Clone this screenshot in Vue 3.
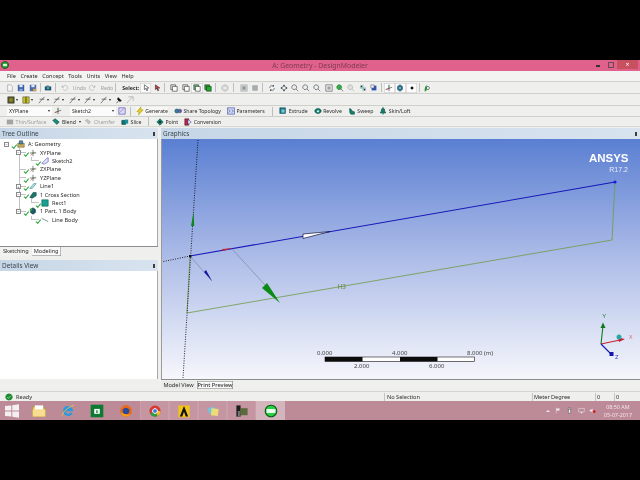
<template>
  <div class="page">
    <div class="band"></div>

    <div class="window">
      <div class="titlebar">
        <Ic name="dm" class="title-logo" />
        <span class="title">A: Geometry - DesignModeler</span>
        <div class="win-btns">
          <span class="win-min"></span>
          <span class="win-max"></span>
          <span class="win-close">×</span>
        </div>
      </div>

      <div class="menubar">
        <span v-for="m in menus" :key="m">{{ m }}</span>
      </div>

      <div class="bar row1">
        <template v-for="(it, i) in row1" :key="i">
          <span v-if="it === '|'" class="sep"></span>
          <span v-else-if="it.text" class="tool" :class="it.cls"><Ic v-if="it.ic" :name="it.ic" />{{ it.text }}</span>
          <span v-else class="btn" :class="it.cls"><Ic :name="it.ic" /></span>
        </template>
      </div>

      <div class="bar row2">
        <span v-for="(it, i) in row2" :key="i" class="btn" :class="it.cls"><Ic :name="it.ic" /><i v-if="it.drop" class="caret"></i></span>
      </div>

      <div class="bar row3">
        <span class="combo">XYPlane<i class="caret"></i></span>
        <span class="btn"><Ic name="axes" /></span>
        <span class="combo second">Sketch2<i class="caret"></i></span>
        <span class="btn"><Ic name="sketch" /></span>
        <span class="sep"></span>
        <span v-for="t in row3" :key="t.text" class="tool" :class="t.cls"><span v-if="t.line" class="sep inline"></span><Ic :name="t.ic" />{{ t.text }}</span>
      </div>

      <div class="bar row4">
        <span v-for="t in row4" :key="t.text" class="tool" :class="t.cls"><span v-if="t.line" class="sep inline"></span><Ic :name="t.ic" />{{ t.text }}<i v-if="t.drop" class="caret"></i></span>
      </div>

      <div class="work">
        <aside class="left">
          <div class="panel-head">Tree Outline<span class="pin"></span></div>
          <div class="tree">
            <div v-for="n in tree" :key="n.text" class="node" :class="['lv' + n.lv, n.cls]">
              <span class="box" :class="{ off: !n.box }">{{ n.box }}</span>
              <span class="check"></span>
              <Ic :name="n.ic" />
              <span class="node-text">{{ n.text }}</span>
            </div>
          </div>
          <div class="tabs">
            <span class="tab">Sketching</span>
            <span class="tab on">Modeling</span>
          </div>
          <div class="panel-head details">Details View<span class="pin"></span></div>
          <div class="details-body"></div>
        </aside>

        <main class="right">
          <div class="panel-head">Graphics<span class="pin"></span></div>
          <div class="canvas">
            <svg class="scene" viewBox="161 139 479 240" width="479" height="240">
              <defs>
                <linearGradient id="sky" x1="0" y1="0" x2="0" y2="1">
                  <stop offset="0" stop-color="#5a7fd2" />
                  <stop offset="0.5" stop-color="#aebde8" />
                  <stop offset="1" stop-color="#f6f7fc" />
                </linearGradient>
              </defs>
              <rect x="161" y="139" width="479" height="240" fill="url(#sky)" />

              <path d="M190 256L187 313L612 240L615 182" fill="none" stroke="#6f9a45" stroke-width="0.8" />
              <path d="M198 140L183 378M161 262L190 256" fill="none" stroke="#111" stroke-width="0.9" stroke-dasharray="1 1.4" />
              <path d="M190 256L615 182" stroke="#1818b8" stroke-width="1.1" />
              <path d="M190 256L212 281M233 250L265 285" stroke="#6f7f9a" stroke-width="0.6" />
              <circle cx="615" cy="182" r="1.6" fill="#1a1ae0" />
              <rect x="189" y="255" width="2.4" height="2.4" fill="#111" />

              <path d="M193.700 212L191 226L194.200 226Z" fill="#0c8a18" />
              <path d="M204 272L206 270L212 281Z" fill="#1414a8" />
              <path d="M222 249L233 248L223 251Z" fill="#c8283a" />
              <path d="M303 234L330 231.500L303 238.500Z" fill="#fff" stroke="#14143c" stroke-width="0.7" />
              <path d="M262 288L267 283L280 303Z" fill="#0c8a18" />

              <text x="337.500" y="288.500" class="dim">H3</text>

              <text x="628.500" y="162" text-anchor="end" class="brand">ANSYS</text>
              <text x="628" y="171.500" text-anchor="end" class="brand-sub">R17.2</text>

              <rect x="325" y="357" width="149.500" height="4.400" fill="#fff" stroke="#111" stroke-width="0.6" />
              <rect x="325" y="357" width="37.500" height="4.400" fill="#0c0c0c" />
              <rect x="400" y="357" width="37.500" height="4.400" fill="#0c0c0c" />
              <text x="317" y="355" class="scale">0.000</text>
              <text x="392" y="355" class="scale">4.000</text>
              <text x="467" y="355" class="scale">8.000 (m)</text>
              <text x="354" y="368" class="scale">2.000</text>
              <text x="429" y="368" class="scale">6.000</text>

              <path d="M601 344L603 326" stroke="#0c7a18" stroke-width="1.100" />
              <path d="M603 322.500L600.500 328L605.500 328Z" fill="#0c7a18" />
              <path d="M601 344L620 340" stroke="#c42030" stroke-width="1.100" />
              <path d="M625 339L618 337.500L619 342Z" fill="#c42030" />
              <path d="M601 344L611 354" stroke="#1414b0" stroke-width="1.100" />
              <rect x="609.500" y="352" width="4" height="4" fill="#1414b0" />
              <circle cx="619" cy="337" r="2.500" fill="#2aa8a8" />
              <text x="602.500" y="318" class="axis y">Y</text>
              <text x="629" y="339" class="axis x">X</text>
              <text x="615" y="359" class="axis z">Z</text>
            </svg>
          </div>
          <div class="view-tabs">
            <span class="tab vt first">Model View</span>
            <span class="tab on vt second">Print Preview</span>
          </div>
        </main>
      </div>

      <div class="status">
        <span class="st-ready"><Ic name="ok" />Ready</span>
        <span class="st-sel">No Selection</span>
        <span class="st-unit">Meter</span>
        <span class="st-deg">Degree</span>
        <span class="st-num">0</span>
        <span class="st-num">0</span>
      </div>

      <div class="taskbar">
        <span v-for="t in taskbar" :key="t.ic" class="task" :class="t.cls"><Ic :name="t.ic" /></span>
        <div class="tray">
          <span class="tray-up"></span>
          <Ic name="flag" /><Ic name="plug" /><Ic name="net" /><Ic name="mute" />
          <div class="clock">
            <span>08:50 AM</span>
            <span>05-07-2017</span>
          </div>
        </div>
      </div>
    </div>

    <div class="band"></div>
  </div>
</template>

<script setup>
import { h } from "vue";

// each icon is a list of [path, fill, stroke] on a 10x10 box
const icons = {
  dm: [["M5 .5a4.5 4.5 0 1 0 .01 0z", "#1a9a2a", "#0b3a12"], ["M2.500 3.500h5v3h-5z", "#d8f5d8"]],
  page: [["M2 1h4l2 2v6H2z", "#f4f4f4", "#8a92a0"]],
  save: [["M1 1h8v8H1z", "#3a5fa8"], ["M3 1h4v3H3z", "#dfe6f4"], ["M3 6h4v3H3z", "#8da4d0"]],
  saveas: [["M1 1h8v8H1z", "#4a6ab0"], ["M3 1h4v3H3z", "#dfe6f4"], ["M5 6h4v3H5z", "#d8a040"]],
  cam: [["M1 3h8v5H1z", "#26506a"], ["M3.500 4a1.700 1.700 0 1 0 3 0z", "#30c0c8"], ["M3 2h3v1H3z", "#26506a"]],
  undo: [["M3 2.500a3.200 3.200 0 1 1-.5 4", "none", "#a8a8a8"], ["M1 1.500v3h3z", "#a8a8a8"]],
  redo: [["M7 2.500a3.200 3.200 0 1 0 .5 4", "none", "#a8a8a8"], ["M9 1.500v3H6z", "#a8a8a8"]],
  point: [["M3 1L3 7L5 5.500L6 8.500L7 8L6 5h2.500z", "#fff", "#222"]],
  pick: [["M3 1L3 7L5 5.500L6 8.500L7 8L6 5h2.500z", "#d04040", "#222"]],
  face: [["M1 1h6v6H1z", "#e8f0e8", "#222"], ["M3 3h6v6H3z", "#fff", "#222"]],
  faceg: [["M1 1h6v6H1z", "#6ac070", "#222"], ["M3 3h6v6H3z", "#fff", "#222"]],
  faceb: [["M1 1h6v6H1z", "#2ea838", "#222"], ["M3 3h6v6H3z", "#18b028", "#222"]],
  globe: [["M5 1a4 4 0 1 0 .01 0z", "#d6d6d6", "#a8a8a8"], ["M3 4h4v2H3z", "#efefef"]],
  sel: [["M1 1h8v8H1z", "#cfd4d4", "#9aa0a0"], ["M3 3h4v4H3z", "#8e9696"]],
  sel2: [["M2 2h6v6H2z", "#a8aeae", "#9aa0a0"]],
  rot: [["M8 5a3 3 0 0 1-5 2.300M2 5a3 3 0 0 1 5-2.300", "none", "#2a3a4a"], ["M7.500 .800v2.400H5.200z", "#2a3a4a"], ["M2.500 9.200V6.800h2.300z", "#2a3a4a"]],
  pan: [["M5 .5L7 3H3zM5 9.500L3 7h4zM.5 5L3 3v4zM9.500 5L7 7V3z", "#30404e"]],
  zoom: [["M4 1a3 3 0 1 0 .01 0z", "#e8eef2", "#333"], ["M6 6l3 3", "none", "#333"]],
  zoomg: [["M4 1a3 3 0 1 0 .01 0z", "#30b040", "#1a6a28"], ["M6 6l3 3", "none", "#333"]],
  zoomx: [["M4 1a3 3 0 1 0 .01 0z", "#e0e0e0", "#a0a0a0"], ["M6 6l3 3", "none", "#a0a0a0"]],
  fit: [["M1 1h8v8H1z", "#eef0f0", "#444"], ["M3 3h4v4H3z", "#9aa4a8"]],
  iso: [["M5 1v8M1 5h8", "none", "#30a0a8"], ["M2 2h2v2H2zM6 6h2v2H6z", "#333"]],
  cube: [["M2 2h6v6H2z", "#2e54b0"], ["M1 1h4v4H1z", "#e8eef8", "#666"]],
  axes: [["M5 1v8M1 7l8-3", "none", "#223"], ["M5 1v4", "none", "#2a9a30"], ["M1 7l4-1.500", "none", "#c83030"]],
  body: [["M2 3l3-2 3 2v4l-3 2-3-2z", "#2a7a9a", "#1a3a4a"], ["M4 4h2v2H4z", "#9ac8e0"]],
  dot: [["M5 3.200a1.800 1.800 0 1 0 .01 0z", "#111"]],
  leaf: [["M2 9C2 4 4 2 4 1c1 2 1 6 0 8z", "#1da030"], ["M6 3a2 2 0 1 0 .01 0z", "none", "#222"]],
  square: [["M1 1h8v8H1z", "#5a5a20", "#333"], ["M3 3h4v4H3z", "#8a8a30"]],
  yellow: [["M1 1h8v8H1z", "#c8c020", "#555"], ["M4 1h2v8H4z", "#777720"]],
  lines: [["M1 9L8 1M2 4h6", "none", "#222"]],
  pinned: [["M2 9l3-4M4 2l4 4-2 1-3-3z", "#111", "#111"]],
  slash: [["M1 9L8 1M3 1h6v5", "none", "#999"]],
  bolt: [["M6 0L1 6h3L3 10l6-6.500H6z", "#e8d020", "#a89010"]],
  share: [["M1 5a2.500 2.500 0 1 0 5 0a2.500 2.500 0 1 0-5 0z", "#2a8a9a", "#164a5a"], ["M5 5a2.200 2.200 0 1 0 4.500 0a2.200 2.200 0 1 0-4.500 0z", "#6a62b8", "#3a3070"]],
  param: [["M.5 1h9v8h-9z", "#cfd8f0", "#2a38a0"], ["M2 3l2 2-2 2M6 3l2 2-2 2", "none", "#2a38a0"]],
  sketch: [["M1 1h8v8H1z", "#dcdcf4", "#3a3ab0"], ["M2 7l5-5", "none", "#b03ab0"]],
  extrude: [["M1 1h7v7H1z", "#1a7a8a", "#0a3a4a"], ["M3 3h4v4H3z", "#70c8d0"]],
  revolve: [["M5 2a4 3 0 1 0 .01 0z", "#1a8070", "#0a3a3a"], ["M5 4a1.500 1.200 0 1 0 .01 0z", "#bfe"]],
  sweep: [["M2 2c3 0 2 4 6 4v3H4C2 9 2 5 2 2z", "#14806a", "#0a4a40"]],
  loft: [["M5 .5L7.500 4h-1l2 3.500h-7l2-3.500h-1z", "#14806a", "#0a4a40"], ["M4.300 7.500h1.400V9.500H4.300z", "#14806a"]],
  thin: [["M1 2h8v6H1z", "#a4a4a4"]],
  blend: [["M1 3l3-2 5 4-3 3z", "#12907a", "#0a3a3a"]],
  chamfer: [["M1 3l3-2 5 4-3 3z", "#c0c0c0"]],
  slice: [["M1 3h5v5H1z", "#12707a", "#0a3a3a"], ["M5 2h4v5H5z", "#1a9098"]],
  pointg: [["M5 1l4 4-4 4-4-4z", "#14806a", "#0a4a40"], ["M4 4h2v2H4z", "#111"]],
  conv: [["M1 1h5v8H1z", "#b02a40", "#601020"], ["M5 2l4 3-4 3z", "#fff", "#2030a0"]],
  geom: [["M1 4h8v5H1z", "#c8b060", "#6a5a20"], ["M3 1h4v4H3z", "#4a90b0", "#1a3a5a"]],
  plane: [["M5 1v8M1 5h8", "none", "#222"], ["M2 8l3-3", "none", "#c02a2a"], ["M5 5l3-1", "none", "#2a9a30"]],
  sk: [["M1 8L8 1h1v5L4 9z", "#e4e4fa", "#4040b0"]],
  line1: [["M1 8L6 2h3L4 8z", "#bfe6e0", "#20808a"]],
  cross: [["M1 8L5 2h4v4L4 9z", "#1a7a70", "#0a3a3a"]],
  rect: [["M1 1h8v8H1z", "#18a090", "#0a5a50"]],
  part: [["M2 3l3-2 3 2v4l-3 2-3-2z", "#1a5a6a", "#0a2a3a"], ["M1 2h3v3H1z", "#30a040"]],
  lineb: [["M1 3l8 4", "none", "#2a3a4a"]],
  ok: [["M5 .5a4.500 4.500 0 1 0 .01 0z", "#1b8a30"], ["M2.800 5l1.600 1.700L7.400 3.400", "none", "#fff"]],
  win: [["M0 1.500L4.500 1v3.700H0zM5.200.9L10 .2v4.500H5.200zM0 5.300h4.500V9L0 8.500zM5.200 5.300H10v4.500L5.200 9.100z", "#f4f0f2"]],
  folder: [["M.5 2h3.500l1 1H9.500v6H.5z", "#f2cf70", "#b89040"], ["M2 1h6v3H2z", "#fff"], ["M.5 4h9v5h-9z", "#f7dd90"]],
  ie: [["M5 1.500a3.500 3.500 0 1 0 3.300 4.700H6.500a1.800 1.800 0 0 1-3.200-1h5.300A3.500 3.500 0 0 0 5 1.500z", "#2a9ae0"], ["M.8 8.500C1 6 5 2 9.300 1", "none", "#e8c040"]],
  store: [["M.5.5h9v9h-9z", "#0c7a30"], ["M3 3.500h4v3.500H3z", "#fff"], ["M4.500 4.500h.5v2h-.5zM5.300 4.500h.5v2h-.5z", "#0c7a30"]],
  fox: [["M5 .8a4.200 4.200 0 1 0 .01 0z", "#e86a1a"], ["M5 2.600a2.400 2.400 0 1 0 .01 0z", "#2a4a9a"], ["M1 6c1 3 5 4 7.500 1.500C6 8 3 7 1 6z", "#f4a020"]],
  chrome: [["M5 1a4 4 0 1 0 .01 0z", "#d83a30"], ["M5 5L1.500 7A4 4 0 0 0 7 8.500z", "#2aa040"], ["M5 5h4a4 4 0 0 1-2 3.500z", "#f0c020"], ["M5 3.300a1.700 1.700 0 1 0 .01 0z", "#3a7ae0", "#fff"]],
  ansys: [["M1 1h8v8.500H1z", "#f2c418"], ["M5 1.500L2 9h1.800L5 5.500 6.200 9H8z", "#111"]],
  notes: [["M1 3l5-1 1 4-5 1z", "#7ac0d8"], ["M4 3l5 .5-.5 5-5-.5z", "#ecdc78"]],
  video: [["M1 1h3v8H1z", "#1c1c1c"], ["M4 3h5v5H4z", "#5a6a3a"], ["M2 5h1.500v4H2z", "#777"]],
  dmbig: [["M5 .5a4.500 4.500 0 1 0 .01 0z", "#0a5a18"], ["M5 1.300a3.700 3.700 0 1 0 .01 0z", "#2ad040"], ["M1.800 3.600h6.400v2.800H1.800z", "#eafff0"]],
  flag: [["M2 1v8", "none", "#eee"], ["M2 2h5l-1 1.500 1 1.500H2z", "#eee"]],
  plug: [["M3 1h4v2H3zM3.500 3h3v6h-3z", "#eee", "#555"]],
  net: [["M1 2h8v5H1z", "none", "#eee"], ["M4 7h2v2H4z", "#eee"]],
  mute: [["M1 4h2l2-2v6L3 6H1z", "#eee"], ["M7.500 4.500a2 2 0 1 0 .01 0z", "#d81818"]],
};

const Ic = (props) =>
  h(
    "svg",
    { class: "ic", viewBox: "0 0 10 10" },
    (icons[props.name] || []).map((p) =>
      h("path", { d: p[0], fill: p[1], stroke: p[2] || "none", "stroke-width": 0.7 })
    )
  );

const menus = ["File", "Create", "Concept", "Tools", "Units", "View", "Help"];

const row1 = [
  { ic: "page" }, { ic: "save" }, { ic: "saveas" }, "|", { ic: "cam" }, "|",
  { ic: "undo", text: "Undo", cls: "grey w-undo ml3" },
  { ic: "redo", text: "Redo", cls: "grey w-undo ml2" }, "|",
  { text: "Select:", cls: "w-sel" },
  { ic: "point", cls: "pressed ml2" }, { ic: "pick" }, "|",
  { ic: "face", cls: "ml2" }, { ic: "face" }, { ic: "faceg", cls: "pressed" }, { ic: "faceb" }, "|",
  { ic: "globe", cls: "wide" }, "|",
  { ic: "sel", cls: "ml2" }, { ic: "sel2" }, "|",
  { ic: "rot", cls: "ml2" }, { ic: "pan" }, { ic: "zoom" }, { ic: "zoom" }, { ic: "zoom" }, { ic: "fit" },
  { ic: "zoomg" }, { ic: "zoomx" }, { ic: "iso" }, { ic: "cube" }, "|",
  { ic: "axes", cls: "pressed" }, { ic: "body", cls: "pressed" }, { ic: "dot", cls: "pressed" }, "|",
  { ic: "leaf" },
];

const row2 = [
  { ic: "square", drop: true, cls: "drop" }, { ic: "yellow", drop: true, cls: "drop" },
  { ic: "lines", drop: true, cls: "drop" }, { ic: "lines", drop: true, cls: "drop" },
  { ic: "lines", drop: true, cls: "drop" }, { ic: "lines", drop: true, cls: "drop" },
  { ic: "lines", drop: true, cls: "drop" }, { ic: "pinned" }, { ic: "slash" },
];

const row3 = [
  { ic: "bolt", text: "Generate", cls: "hi" },
  { ic: "share", text: "Share Topology" },
  { ic: "param", text: "Parameters" },
  { ic: "extrude", text: "Extrude", line: true },
  { ic: "revolve", text: "Revolve" },
  { ic: "sweep", text: "Sweep" },
  { ic: "loft", text: "Skin/Loft" },
];

const row4 = [
  { ic: "thin", text: "Thin/Surface", cls: "grey" },
  { ic: "blend", text: "Blend", drop: true, cls: "tight" },
  { ic: "chamfer", text: "Chamfer", cls: "grey" },
  { ic: "slice", text: "Slice" },
  { ic: "pointg", text: "Point", line: true },
  { ic: "conv", text: "Conversion" },
];

const tree = [
  { lv: 0, box: "−", ic: "geom", text: "A: Geometry" },
  { lv: 1, box: "−", ic: "plane", text: "XYPlane" },
  { lv: 2, box: "", ic: "sk", text: "Sketch2" },
  { lv: 1, box: "", ic: "plane", text: "ZXPlane" },
  { lv: 1, box: "", ic: "plane", text: "YZPlane" },
  { lv: 1, box: "+", ic: "line1", text: "Line1" },
  { lv: 1, box: "−", ic: "cross", text: "1 Cross Section" },
  { lv: 2, box: "", ic: "rect", text: "Rect1" },
  { lv: 1, box: "−", ic: "part", text: "1 Part, 1 Body", cls: "end" },
  { lv: 2, box: "", ic: "lineb", text: "Line Body", cls: "end" },
];

const taskbar = [
  { ic: "win", cls: "start" }, { ic: "folder" }, { ic: "ie" }, { ic: "store" }, { ic: "fox" },
  { ic: "chrome", cls: "open" }, { ic: "ansys", cls: "open" }, { ic: "notes", cls: "open" },
  { ic: "video", cls: "open" }, { ic: "dmbig", cls: "active" },
];
</script>

<style>
html,
body {
  margin: 0;
  background: #000;
}
</style>

<style scoped>
.page {
  width: 640px;
  height: 480px;
  display: flex;
  flex-direction: column;
  font-family: "Noto Sans", "Liberation Sans", sans-serif;
  font-size: 5.6px;
  color: #2c2c2c;
  overflow: hidden;
}
.band {
  height: 60px;
  background: #000;
  flex: none;
}
.window {
  height: 360px;
  flex: none;
  display: flex;
  flex-direction: column;
  background: #eff0ee;
  filter: blur(0.4px);
}
.ic {
  width: 8px;
  height: 8px;
  flex: none;
}

.titlebar {
  height: 11px;
  flex: none;
  background: #e0628c;
  display: flex;
  align-items: center;
  justify-content: center;
  position: relative;
}
.title-logo {
  position: absolute;
  left: 1px;
  top: 1px;
}
.title {
  font-size: 6.900px;
  color: #7d3a52;
}
.win-btns {
  position: absolute;
  right: 2px;
  top: 0;
  display: flex;
  align-items: center;
  height: 9px;
}
.win-min {
  width: 4px;
  height: 1.500px;
  background: #333;
  margin-top: 3px;
  margin-right: 8px;
}
.win-max {
  width: 4px;
  height: 4px;
  border: 1px solid #6b4a56;
  margin-right: 3px;
}
.win-close {
  width: 21px;
  height: 9px;
  background: #c9505f;
  color: #fff;
  text-align: center;
  line-height: 9px;
  font-size: 7px;
}

.menubar {
  height: 10px;
  flex: none;
  display: flex;
  align-items: center;
  padding-left: 7px;
  gap: 4.500px;
  background: #f3f3f1;
}

.bar {
  display: flex;
  align-items: center;
  flex: none;
  border-top: 1px solid #cfd0cc;
  box-sizing: border-box;
  font-size: 5.200px;
}
.row1 {
  height: 12px;
  padding-left: 4.500px;
}
.row2 {
  height: 12px;
  padding-left: 4.500px;
}
.row3 {
  height: 11px;
  padding-left: 7px;
}
.row4 {
  height: 11px;
  padding-left: 6px;
  border-bottom: 1px solid #d8d8d4;
}
.btn {
  width: 11.300px;
  height: 10px;
  display: flex;
  align-items: center;
  justify-content: center;
  flex: none;
}
.btn.pressed {
  background: #fbfbfb;
  box-shadow: inset 0 0 0 0.5px #c4c4c4;
}
.btn.wide {
  width: 14px;
}
.btn.drop {
  width: 15.500px;
}
.ml2 {
  margin-left: 2px;
}
.ml3 {
  margin-left: 3.500px;
}
.caret {
  display: inline-block;
  width: 0;
  height: 0;
  border-left: 1.800px solid transparent;
  border-right: 1.800px solid transparent;
  border-top: 2px solid #222;
  margin-left: 1px;
}
.sep {
  width: 1px;
  height: 9px;
  background: #bdbdb9;
  margin: 0 1.500px;
  flex: none;
}
.row3 > .sep {
  margin: 0 3px;
}
.sep.inline {
  margin: 0 5px 0 1px;
}
.tool {
  display: flex;
  align-items: center;
  gap: 1.500px;
  white-space: nowrap;
  flex: none;
}
.tool.grey {
  color: #9c9c9c;
}
.tool.hi {
  background: #f6f6f4;
  margin-left: 1.500px;
}
.w-undo {
  width: 25px;
  justify-content: space-between;
}
.w-sel {
  font-weight: 700;
  width: 16px;
  margin-left: 5px;
}
.row3 .tool,
.row4 .tool {
  margin-right: 6px;
}
.row4 .tool.tight {
  margin-right: 3.500px;
}
.row4 .tool .caret {
  margin-left: 1.500px;
}
.combo {
  width: 45px;
  height: 9px;
  background: #fbfbfb;
  display: flex;
  align-items: center;
  justify-content: space-between;
  padding: 0 2px;
  box-sizing: border-box;
  flex: none;
}
.combo.second {
  width: 46px;
  margin-left: 6.700px;
}

.work {
  flex: 1;
  min-height: 0;
  display: flex;
  gap: 3px;
  padding-top: 1px;
  background: #eff0ee;
}
.left {
  width: 158px;
  flex: none;
  display: flex;
  flex-direction: column;
}
.right {
  flex: 1;
  min-width: 0;
  display: flex;
  flex-direction: column;
}
.panel-head {
  height: 11px;
  flex: none;
  display: flex;
  align-items: center;
  justify-content: space-between;
  padding: 0 3px 0 2px;
  font-size: 6.400px;
  color: #3a4650;
  background: linear-gradient(90deg, #c6d6e6, #d8e3ef);
}
.pin {
  width: 2px;
  height: 4px;
  background: #3c3c3c;
}
.tree {
  height: 107px;
  flex: none;
  background: #fff;
  padding-top: 1px;
  box-sizing: border-box;
  border-right: 1px solid #a8a8a8;
}
.node {
  display: flex;
  align-items: center;
  height: 8.400px;
  background-repeat: no-repeat;
}
.lv0 {
  padding-left: 4px;
}
.lv1 {
  padding-left: 16px;
  background-image: linear-gradient(#c2c2c2, #c2c2c2), linear-gradient(#c2c2c2, #c2c2c2);
  background-position: 18.500px 0, 18.500px 50%;
  background-size: 1px 100%, 7px 1px;
}
.lv1.end {
  background-size: 1px 50%, 7px 1px;
}
.lv2 {
  padding-left: 28px;
  background-image: linear-gradient(#c2c2c2, #c2c2c2), linear-gradient(#c2c2c2, #c2c2c2), linear-gradient(#c2c2c2, #c2c2c2);
  background-position: 18.500px 0, 31px 0, 31px 50%;
  background-size: 1px 100%, 1px 50%, 8px 1px;
}
.lv2.end {
  background-size: 0 0, 1px 50%, 8px 1px;
}
.box {
  width: 5px;
  height: 5px;
  box-sizing: border-box;
  border: 0.500px solid #8a8a8a;
  background: #fff;
  font-size: 4px;
  line-height: 4px;
  text-align: center;
  margin-right: 3.500px;
  flex: none;
}
.box.off {
  visibility: hidden;
}
.check {
  width: 2px;
  height: 3.500px;
  border-right: 1px solid #20a030;
  border-bottom: 1px solid #20a030;
  transform: translateY(1.500px) rotate(40deg);
  margin-right: 1.500px;
  flex: none;
}
.node-text {
  margin-left: 3px;
  white-space: nowrap;
}
.tabs {
  height: 12px;
  flex: none;
  display: flex;
  align-items: flex-start;
  padding-left: 1px;
  gap: 1px;
  border-top: 1px solid #8c8c8c;
  box-sizing: border-box;
}
.tab {
  height: 9px;
  line-height: 9px;
  padding: 0 2px;
  background: #f2f2f0;
  white-space: nowrap;
}
.tab.on {
  background: #fafafa;
  box-shadow: inset -0.500px -0.500px 0 #777;
}
.details {
  margin-top: 2px;
}
.details-body {
  flex: 1;
  min-height: 0;
  background: #fff;
  border-right: 1px solid #a8a8a8;
  margin-bottom: 12px;
}
.canvas {
  height: 240px;
  flex: none;
  border-left: 1px solid #9a9a9a;
  box-sizing: border-box;
  overflow: hidden;
}
.scene {
  display: block;
  margin-left: -1px;
}
.dim {
  font-size: 6.400px;
  fill: #5a8a30;
}
.brand {
  font-family: "Liberation Sans", sans-serif;
  font-size: 11.500px;
  font-weight: 700;
  fill: #fff;
}
.brand-sub {
  font-family: "Liberation Sans", sans-serif;
  font-size: 7px;
  fill: #e8ecf8;
}
.scale {
  font-size: 6px;
  fill: #444;
}
.axis {
  font-size: 6px;
}
.axis.y {
  fill: #1a8a2a;
}
.axis.x {
  fill: #e06a78;
}
.axis.z {
  fill: #3a3ad0;
}
.view-tabs {
  height: 12px;
  flex: none;
  display: flex;
  gap: 2px;
  padding-left: 1px;
  border-top: 1px solid #8c8c8c;
  box-sizing: border-box;
  align-items: flex-start;
}
.vt {
  height: 8px;
  line-height: 8px;
  box-sizing: border-box;
  text-align: center;
  padding: 0;
  margin-top: 1px;
}
.vt.first {
  width: 33px;
  background: #e9e9e7;
}
.vt.second {
  width: 36px;
  font-weight: 500;
  box-shadow: inset 0 0 0 0.600px #777;
}

.status {
  height: 10px;
  flex: none;
  display: flex;
  align-items: center;
  border-top: 1px solid #d4d4d0;
  box-sizing: border-box;
}
.st-ready {
  width: 384px;
  display: flex;
  align-items: center;
  gap: 3px;
  padding-left: 5px;
  box-sizing: border-box;
}
.st-sel {
  width: 148px;
  padding-left: 2px;
  border-left: 1px solid #c4c4c0;
  box-sizing: border-box;
}
.st-unit {
  width: 19px;
  padding-left: 1px;
  border-left: 1px solid #c4c4c0;
  box-sizing: border-box;
}
.st-deg {
  width: 44px;
}
.st-num {
  width: 19px;
  border-left: 1px solid #c4c4c0;
  padding-left: 1px;
  box-sizing: border-box;
}

.taskbar {
  height: 19px;
  flex: none;
  display: flex;
  align-items: stretch;
  background: #bd8b98;
}
.task {
  width: 29px;
  display: flex;
  align-items: center;
  justify-content: center;
  flex: none;
}
.task.start {
  width: 24px;
}
.task .ic {
  width: 14px;
  height: 14px;
}
.task.open {
  box-shadow: inset 1px 0 0 #c9a0aa, inset -1px 0 0 #c9a0aa;
  background: #c596a2;
}
.task.active {
  background: #d5b5bd;
}
.tray {
  margin-left: auto;
  display: flex;
  align-items: center;
  gap: 4.500px;
  padding-right: 8px;
}
.tray .ic {
  width: 7px;
  height: 7px;
}
.tray-up {
  width: 0;
  height: 0;
  border-left: 2px solid transparent;
  border-right: 2px solid transparent;
  border-bottom: 2px solid #eee;
}
.clock {
  display: flex;
  flex-direction: column;
  align-items: center;
  color: #f3e4e8;
  font-size: 5.400px;
  line-height: 8px;
  margin-left: 3px;
}
</style>
